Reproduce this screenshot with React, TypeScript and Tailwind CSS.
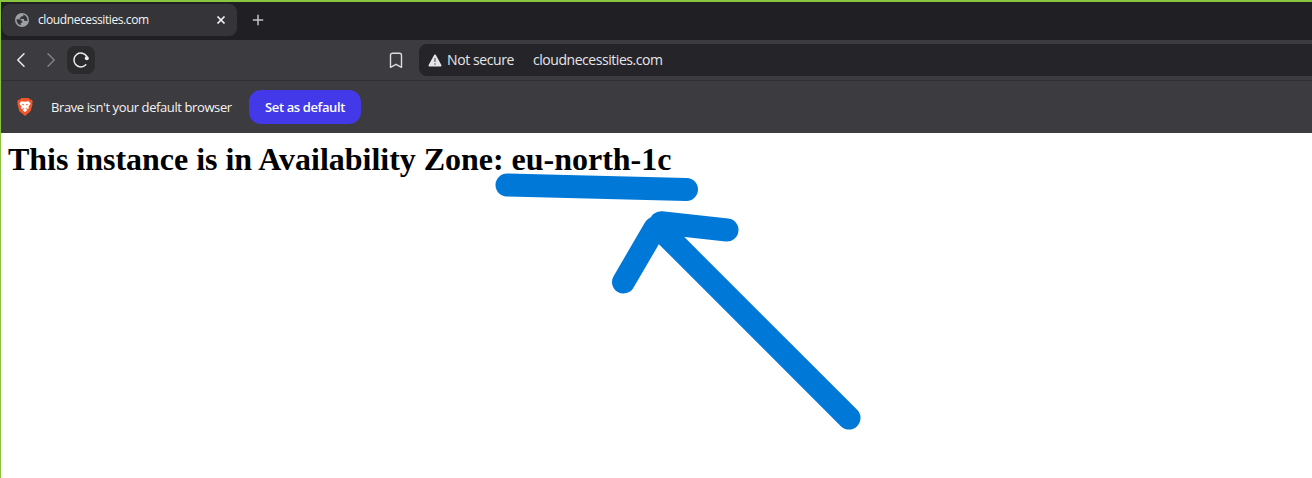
import React from "react";

function GlobeIcon() {
  return (
    <svg width="14" height="14" viewBox="0 0 14 14" className="shrink-0">
      <circle cx="7" cy="7" r="7" fill="#9aa0a6" />
      <path
        d="M1.500 6.300H5L7.300 8.200V9.800H5.800V12.300C3.200 11.700 1.500 9.500 1.500 6.300ZM8.300 1.600V3.200H6.300V4.500H4.800V6H8.800L9.600 8H12.400C12.800 5 11.200 2.400 8.300 1.600Z"
        fill="#353438"
      />
    </svg>
  );
}

function TabStrip() {
  return (
    <div className="flex h-[38px] items-start bg-[#201f23] pl-px pt-[2px]">
      <div className="flex h-8 w-[235px] items-center rounded-[8px] bg-[#353438] pl-[13px] pr-[11px]">
        <GlobeIcon />
        <span className="ml-[9px] flex-1 whitespace-nowrap text-[12px] font-medium leading-4 tracking-[-0.4px] text-[#f4f4f5]">
          cloudnecessities.com
        </span>
        <svg width="10" height="10" viewBox="0 0 10 10" fill="none" stroke="#f4f4f5" strokeWidth="1.700">
          <path d="M1.500 1.500 8.500 8.500M8.500 1.500 1.500 8.500" />
        </svg>
      </div>
      <svg width="12" height="12" viewBox="0 0 12 12" fill="none" stroke="#c4c4c6" strokeWidth="1.500" className="ml-[15px] mt-[10px]">
        <path d="M6 .8v10.400M.8 6h10.400" />
      </svg>
    </div>
  );
}

function Toolbar() {
  return (
    <div className="flex h-10 items-center bg-[#3c3b3f]">
      <svg width="10" height="16" viewBox="0 0 10 16" fill="none" stroke="#ececee" strokeWidth="1.500" strokeLinecap="round" strokeLinejoin="round" className="ml-[15px]">
        <path d="M8 1.700 1.800 8 8 14.300" />
      </svg>
      <svg width="10" height="16" viewBox="0 0 10 16" fill="none" stroke="#838287" strokeWidth="1.400" strokeLinecap="round" strokeLinejoin="round" className="ml-5">
        <path d="M2 1.700 8.200 8 2 14.300" />
      </svg>
      <div className="ml-[11px] flex size-7 items-center justify-center rounded-[8px] bg-[#2b2a2d]">
        <svg width="18" height="18" viewBox="0 0 18 18" fill="none">
          <path d="M13.800 13.800A6.900 6.900 0 1 1 14.800 5.500" stroke="#ececee" strokeWidth="1.500" strokeLinecap="round" />
          <circle cx="14.800" cy="7.200" r="2" fill="#ececee" />
        </svg>
      </div>
      <svg width="14" height="17" viewBox="0 0 14 17" fill="none" stroke="#dcdcde" strokeWidth="1.400" strokeLinejoin="round" className="ml-[294px]">
        <path d="M3.500 1.200h7a2 2 0 0 1 2 2v12.100L7 12.300l-5.500 3V3.200a2 2 0 0 1 2-2Z" />
      </svg>
      <div className="ml-4 flex h-8 flex-1 items-center rounded-l-[8px] bg-[#252428] pl-[9px] text-[14px] leading-5 text-[#e6e6e8]">
        <svg width="14" height="13" viewBox="0 0 14 13">
          <path d="M7 1.500 12.500 11.500H1.500Z" fill="#e6e6e8" stroke="#e6e6e8" strokeWidth="2" strokeLinejoin="round" />
          <path d="M7 4v4M7 9.300v1.500" stroke="#77767c" strokeWidth="1.500" />
        </svg>
        <span className="ml-[5px] w-[86px] whitespace-nowrap tracking-[-0.4px]">Not secure</span>
        <span className="whitespace-nowrap tracking-[-0.45px]">cloudnecessities.com</span>
      </div>
    </div>
  );
}

function BraveIcon() {
  return (
    <svg width="16" height="18" viewBox="0 0 16 18" className="shrink-0">
      <path
        d="M4.300.1h7.400L13 1.600l1.800.2 1 2.200-.6 1.500.3 1-1.900 6.800L8 18l-5.600-4.700L.5 6.500l.3-1L.2 4l1-2.200L3 1.600Z"
        fill="#f1562b"
      />
      <path
        d="M4.200 3.200 8 3.800l3.800-.6 1.800 2.600-2.100 2.800.4 2-2.500.7 1 1L8 14l-2.400-1.700 1-1-2.500-.7.4-2-2.100-2.800Z"
        fill="#fff"
      />
      <path
        d="M4.600 6.200 6.900 6.100 6.500 7.500ZM11.400 6.200 9.100 6.100 9.500 7.500ZM5.800 9.200 7.300 10.700 8 10.900 8.700 10.700 10.200 9.200 9.600 11.100H6.400Z"
        fill="#f1562b"
      />
    </svg>
  );
}

function DefaultBrowserBar() {
  return (
    <div className="flex h-[53px] items-center border-t border-[#302f33] bg-[#3c3b3f] pl-4 text-[13px] leading-5 text-[#f4f4f5]">
      <BraveIcon />
      <span className="ml-[18px] w-[198px] whitespace-nowrap font-medium tracking-[-0.4px]">
        Brave isn't your default browser
      </span>
      <button className="h-[34px] w-28 whitespace-nowrap rounded-[12px] bg-[#4339e8] font-semibold tracking-[-0.38px] text-white">
        Set as default
      </button>
    </div>
  );
}

export default function App() {
  return (
    <div className="relative flex h-[478px] w-[1312px] flex-col overflow-hidden border-l border-t-2 border-[#8bc53f] bg-white font-['Open_Sans',sans-serif]">
      <TabStrip />
      <Toolbar />
      <DefaultBrowserBar />
      <main className="flex-1 pl-[7px] pt-[8px]">
        <h1 className="whitespace-nowrap font-['Liberation_Serif',serif] text-[32px] font-bold leading-9 tracking-[-0.02px] text-black">
          This instance is in Availability Zone: eu-north-1c
        </h1>
      </main>
      <svg
        width="1312"
        height="478"
        viewBox="0 0 1312 478"
        fill="none"
        stroke="#0078d7"
        strokeWidth="23"
        strokeLinecap="round"
        className="pointer-events-none absolute -left-px -top-[2px]"
      >
        <path d="M507 185 686.500 189.500" />
        <path d="M661 222.700 727 230" />
        <path d="M655 228 623.500 282" />
        <path d="M660 229 849 418" />
      </svg>
    </div>
  );
}
